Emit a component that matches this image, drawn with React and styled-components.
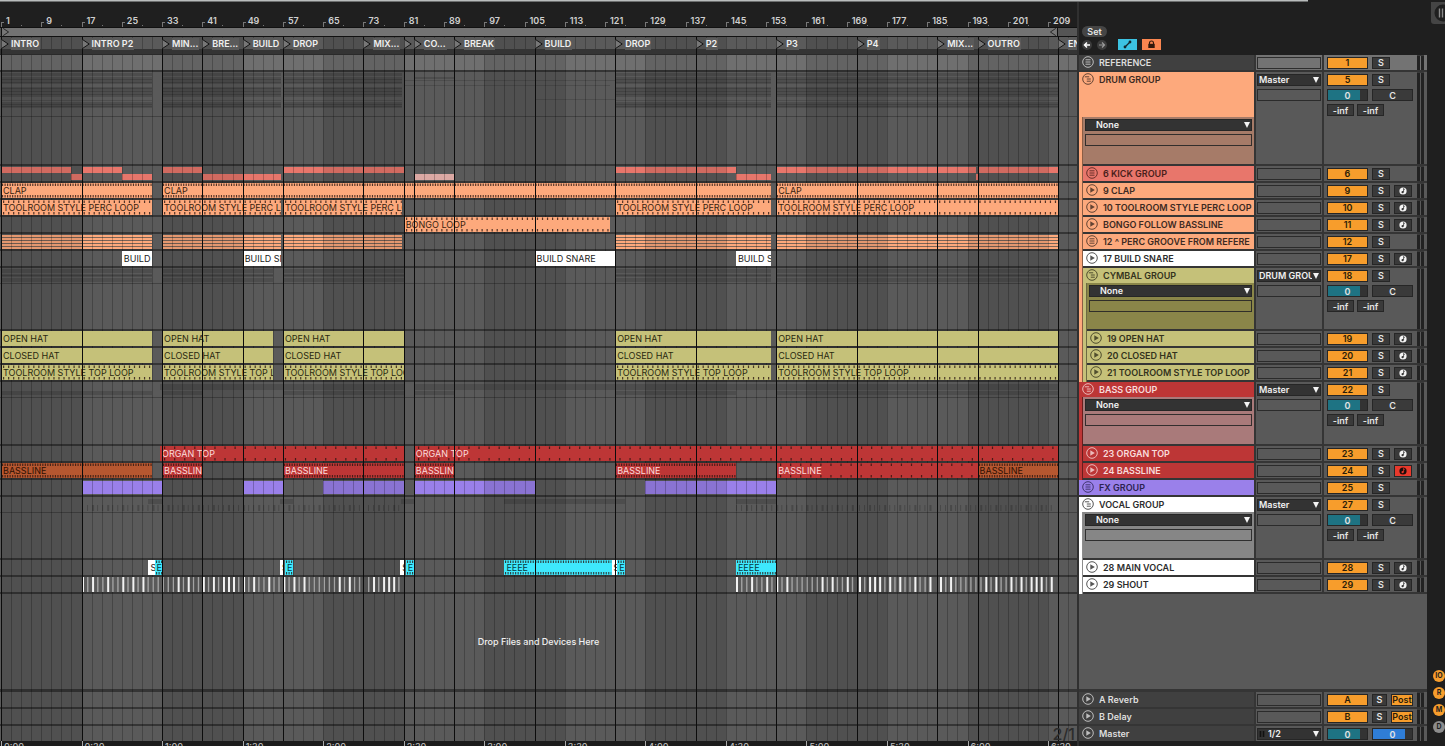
import React from 'react'
import styled, { createGlobalStyle, css } from 'styled-components'

const GlobalStyle = createGlobalStyle`
    * {
        box-sizing: border-box;
    }

    body {
        margin: 0;
        background: #1f1f1f;
        font-family: Inter, 'Liberation Sans', sans-serif;
        font-size: 9px;
        font-weight: 500;
        line-height: 12px;
        color: #e4e4e4;
        overflow: hidden;
    }

    button, input, select {
        font: inherit;
        color: inherit;
        margin: 0;
        padding: 0;
        border: 0;
        border-radius: 0;
    }
`

// how many bars fit in the visible part of the arrangement
const VIEW_BARS = 213.95
const pos = bar => `${(bar - 0.8) / VIEW_BARS * 100}%`
const span = (from, to) => ({ left: pos(from), width: `${(to - from) / VIEW_BARS * 100}%` })
const range = (count, fn) => Array.from({ length: count }, (_, i) => fn(i))

const ORANGE = '#fda97c'
const OLIVE = '#c5c179'
const RED = '#bd3636'
const RUST = '#b65730'
const CORAL = '#e8766b'
const VIOLET = '#9a80ea'
const CYAN = '#3ee8fd'

const LOCATORS = [
    [1, 'INTRO'], [17, 'INTRO P2'], [33, 'MIN...'], [41, 'BRE...'], [49, 'BUILD'], [57, 'DROP'],
    [73, 'MIX...'], [81, ''], [83, 'CO...'], [91, 'BREAK'], [107, 'BUILD'], [123, 'DROP'],
    [139, 'P2'], [155, 'P3'], [171, 'P4'], [187, 'MIX...'], [195, 'OUTRO'], [211, 'END'],
]

const clips = (ranges, name, color, text, step) => ranges.map(([from, to]) => ({ from, to, name, color, text, step }))

const LOOPS = [[1, 31], [33, 56.6], [57, 80.6], [123, 154], [155, 211]]
const HATS = [[1, 31], [33, 55], [57, 81], [123, 154], [155, 211]]
const VOCALS = [[30.3, 33], [56.5, 59], [80.4, 83], [101, 125], [147, 155]]
const SHOUTS = [[17, 73], [74, 81], [147, 171], [171.5, 187], [187.5, 211]]

const TRACKS = [
    { id: 1, name: 'REFERENCE', kind: 'group', color: '#404040', text: '#dedede', lane: '#6f6f6f' },
    {
        id: 5, name: 'DRUM GROUP', kind: 'open', color: ORANGE, device: '#a67b68', text: '#3c2a22', height: 94, title: 45, out: 'Master',
        shades: [
            ...LOOPS.map(([a, b]) => [a, b, [[1, 3], [5, 6], [7, 1], [10, 2], [15, 10], [16, 1], [19, 1], [22, 1], [28, 1], [30, 6], [32, 1], [34, 1]]]),
            [81, 123, [[8, 1]]], [81, 122, [[13, 1]]], [83, 91, [[5, 2]]], [107, 123, [[27, 1]]],
        ],
    },
    {
        id: 6, name: '6 KICK GROUP', kind: 'group', color: CORAL, text: '#4a1f1b', rails: [ORANGE],
        stripes: [
            [1, 15, 1], [15, 17, 2], [17, 25, 1], [25, 31, 2], [33, 41, 1], [41, 56.6, 2], [57, 81, 1], [83, 91, 2, '#dba8a3'],
            [123, 147, 1], [147, 154, 2], [155, 194.6, 1], [194.6, 195, 2], [195, 211, 1],
        ],
    },
    { id: 9, name: '9 CLAP', color: ORANGE, text: '#3c2a22', rails: [ORANGE], rec: true, clips: clips([[1, 31], [33, 154], [155, 211]], 'CLAP', ORANGE, '#38220f', 0.5) },
    { id: 10, name: '10 TOOLROOM STYLE PERC LOOP', color: ORANGE, text: '#3c2a22', rails: [ORANGE], rec: true, clips: clips(LOOPS, 'TOOLROOM STYLE PERC LOOP', ORANGE, '#38220f', 1) },
    { id: 11, name: 'BONGO FOLLOW BASSLINE', color: ORANGE, text: '#3c2a22', rails: [ORANGE], rec: true, clips: clips([[81, 122]], 'BONGO LOOP', ORANGE, '#38220f', 1) },
    { id: 12, name: '12 ^ PERC GROOVE FROM REFERE', kind: 'group', color: ORANGE, text: '#3c2a22', rails: [ORANGE], layers: LOOPS },
    { id: 17, name: '17 BUILD SNARE', color: '#ffffff', text: '#2c2c2c', rails: [ORANGE], rec: true, clips: clips([[25, 31], [49, 56.6], [107, 123], [147, 154]], 'BUILD SNARE', '#ffffff', '#222222') },
    {
        id: 18, name: 'CYMBAL GROUP', kind: 'open', color: OLIVE, device: '#8a8649', text: '#33321c', rails: [ORANGE], height: 63, title: 15, out: 'DRUM GROUP',
        shades: HATS.map(([a, b]) => [a, b, [[1, 4], [6, 3], [7, 1], [10, 4]]]),
    },
    { id: 19, name: '19 OPEN HAT', color: OLIVE, text: '#33321c', rails: [ORANGE, OLIVE], rec: true, clips: clips(HATS, 'OPEN HAT', OLIVE, '#29280f') },
    { id: 20, name: '20 CLOSED HAT', color: OLIVE, text: '#33321c', rails: [ORANGE, OLIVE], rec: true, clips: clips(HATS, 'CLOSED HAT', OLIVE, '#29280f') },
    { id: 21, name: '21 TOOLROOM STYLE TOP LOOP', color: OLIVE, text: '#33321c', rails: [ORANGE, OLIVE], rec: true, clips: clips(HATS, 'TOOLROOM STYLE TOP LOOP', OLIVE, '#29280f', 1) },
    {
        id: 22, name: 'BASS GROUP', kind: 'open', color: RED, device: '#a97a7a', text: '#f8dcdc', height: 64, title: 15, out: 'Master',
        shades: [[32.6, 81, [[2, 6]]], [83, 211, [[2, 6]]], [1, 31, [[9, 4]]], [33, 41, [[9, 4]]], [57, 81, [[9, 4]]], [83, 91, [[9, 4]]], [123, 147, [[9, 4]]], [155, 211, [[9, 4]]]],
    },
    { id: 23, name: '23 ORGAN TOP', color: RED, text: '#f8dcdc', rails: [RED], rec: true, clips: clips([[32.6, 81], [83, 211]], 'ORGAN TOP', RED, '#fbdcdc', 2) },
    {
        id: 24, name: '24 BASSLINE', color: RED, text: '#f8dcdc', rails: [RED], rec: true, armed: true,
        clips: [
            ...clips([[1, 31], [195, 211]], 'BASSLINE', RUST, '#2e1003', 0.5),
            ...clips([[33, 41], [57, 81], [83, 91], [123, 147]], 'BASSLINE', RED, '#fbdcdc', 0.5),
            ...clips([[155, 195]], 'BASSLINE', RED, '#fbdcdc', 2),
        ],
    },
    { id: 25, name: 'FX GROUP', kind: 'group', color: VIOLET, text: '#2c2350', blocks: [[17, 33], [49, 57], [65, 81], [83, 107], [129, 155]] },
    {
        id: 27, name: 'VOCAL GROUP', kind: 'open', color: '#ffffff', device: '#868686', text: '#2c2c2c', height: 63, title: 15, out: 'Master',
        shades: VOCALS.map(([a, b]) => [a, b, [[2, 5]]]), marks: SHOUTS,
    },
    {
        id: 28, name: '28 MAIN VOCAL', color: '#ffffff', text: '#2c2c2c', rails: ['#ffffff'], rec: true,
        clips: [
            ...clips([[30.3, 31.5], [56.4, 57.1], [80.3, 81.3], [122.3, 123.4]], 'S', '#ffffff', '#222222'),
            ...clips([[31.5, 33], [57.4, 59], [81.4, 83], [123.4, 125]], 'E', CYAN, '#083a42', 0.5),
            ...clips([[101, 122.3], [147, 155]], 'EEEE', CYAN, '#083a42', 0.5),
        ],
    },
    { id: 29, name: '29 SHOUT', color: '#ffffff', text: '#2c2c2c', rails: ['#ffffff'], rec: true, hits: SHOUTS },
]

const RETURNS = [{ id: 'A', name: 'A Reverb' }, { id: 'B', name: 'B Delay' }, { id: 'M', name: 'Master', master: true }]

/* ---------- frame ---------- */

const Screen = styled.div`
    height: 100vh;
    display: flex;
    flex-direction: column;
`

const ProgressLine = styled.div`
    height: 2px;
    flex: none;
    margin-right: 137px;
    background: #b9bcbc;
    border-bottom: 1px solid #6d6f6f;
`

const Main = styled.main`
    flex: 1;
    min-height: 0;
    display: flex;
`

const Arrangement = styled.section`
    flex: 1;
    min-width: 0;
    display: flex;
    flex-direction: column;
    overflow: hidden;
`

/* ---------- rulers ---------- */

const Ruler = styled.div`
    position: relative;
    height: 25px;
    flex: none;
`

const BarNumber = styled.span`
    position: absolute;
    top: 13px;
    padding-left: 5px;
    font-weight: 600;
    color: #cfcfcf;

    &::before {
        content: '';
        position: absolute;
        left: 0;
        top: 7px;
        width: 2px;
        height: 4px;
        border-left: 1px solid #777;
        border-top: 1px solid #777;
    }
`

const BarDot = styled.i`
    position: absolute;
    bottom: 1px;
    width: 1px;
    height: 1px;
    background: #777;
`

const ScrubArea = styled.div`
    position: relative;
    height: 10px;
    flex: none;
    background: #555;
    border-top: 1px solid #111;
    border-bottom: 1px solid #111;
`

const LoopBrace = styled.div`
    position: absolute;
    top: 0;
    bottom: 0;
    display: flex;
    justify-content: space-between;
    background: #737373;
    border-left: 1px solid #111;
    border-right: 1px solid #111;

    svg {
        height: 8px;
        width: 8px;
    }
`

const TimeRuler = styled.div`
    position: relative;
    height: 5px;
    flex: none;
    overflow: hidden;
    background: #1c1c1c;
`

const TimeMark = styled.span`
    position: absolute;
    top: 0;
    padding-left: 2px;
    border-left: 1px solid #aaa;
    color: #bbb;
`

/* ---------- lanes ---------- */

const Lanes = styled.div`
    position: relative;
    z-index: 0;
    flex: 1;
    min-height: 0;
    display: flex;
    flex-direction: column;
    background: #5a5a5a;
    overflow: hidden;
`

const Layer = styled.div`
    position: absolute;
    inset: 0;
    z-index: ${props => props.$level};
    pointer-events: none;
`

const Band = styled.i`
    position: absolute;
    top: 0;
    bottom: 0;
    background: rgba(0, 0, 0, 0.1);
`

const GridLine = styled.i`
    position: absolute;
    top: 0;
    bottom: 0;
    width: 1px;
    background: rgba(0, 0, 0, 0.23);
`

const LocatorLine = styled.i`
    position: absolute;
    top: 0;
    bottom: 0;
    width: 1px;
    background: #0c0c0c;
`

const LocatorRow = styled.div`
    position: relative;
    height: 12px;
    flex: none;
`

const LocatorGap = styled.div`
    position: relative;
    z-index: 3;
    height: 6px;
    flex: none;
    background: #343434;
    border-bottom: 1px solid #2a2a2a;
`

const Locator = styled.span`
    position: absolute;
    z-index: 5;
    top: 1px;
    display: flex;
    align-items: center;
    gap: 2px;
    height: 12px;
    font-weight: 600;
    color: #f0f0f0;
    white-space: nowrap;

    svg {
        width: 8px;
        height: 10px;
        flex: none;
    }
`

const LocatorName = styled.span`
    background: #5a5a5a;
    padding-right: 1px;
`

const Lane = styled.div`
    position: relative;
    height: ${props => props.$height || 17}px;
    flex: none;
    border-bottom: ${props => props.$last ? 0 : 2}px solid #353535;
    background: ${props => props.$color || 'transparent'};
`

const FoldLine = styled.i`
    position: absolute;
    left: 0;
    right: 0;
    top: ${props => props.$top}px;
    height: 1px;
    background: #424242;
`

const Shade = styled.i`
    position: absolute;
    top: ${props => props.$top}px;
    height: ${props => props.$height}px;
    background: rgba(0, 0, 0, 0.14);
`

const GroupBlock = styled.i`
    position: absolute;
    z-index: 1;
    top: ${props => props.$top}px;
    height: ${props => props.$height}px;
    background: ${props => props.$color};
`

const GroupLayers = styled(GroupBlock)`
    background: repeating-linear-gradient(${ORANGE} 0 2px, #7a6457 2px 3px);
`

const ClipBox = styled.div`
    position: absolute;
    z-index: 3;
    top: 0;
    height: 15px;
    padding-left: 2px;
    line-height: 15px;
    font-weight: 400;
    overflow: hidden;
    white-space: nowrap;
    background: ${props => props.$color};
    color: ${props => props.$text};

    svg {
        position: absolute;
        left: 0;
        top: 0;
        width: 100%;
        height: 15px;
    }
`

const HitStrip = styled.svg`
    position: absolute;
    z-index: 3;
    top: 0;
    height: 15px;
`

const MarkStrip = styled.svg`
    position: absolute;
    top: 8px;
    height: 6px;
`

const DropZone = styled.div`
    flex: 1;
    min-height: 0;
    display: flex;
    align-items: center;
    justify-content: center;
    border-bottom: 3px solid #353535;

    span {
        position: relative;
        z-index: 5;
        color: #f0f0f0;
    }
`

const GridSize = styled.span`
    position: absolute;
    z-index: 5;
    right: 2px;
    top: 0;
    font-size: 16px;
    line-height: 16px;
    font-weight: 500;
    color: #2c2c2c;
`

/* ---------- track panel ---------- */

const Panel = styled.section`
    width: 350px;
    flex: none;
    display: flex;
    flex-direction: column;
    border-left: 2px solid #303030;
`

const PanelTop = styled.div`
    height: 53px;
    flex: none;
    padding: 24px 3px 0;
    background: #1f1f1f;
`

const SetButton = styled.button`
    display: block;
    width: 25px;
    height: 11px;
    line-height: 11px;
    border-radius: 6px;
    font-weight: 600;
    background: #454545;
`

const Tools = styled.div`
    display: flex;
    align-items: center;
    margin-top: 2px;
    gap: 5px;
`

const RoundButton = styled.button`
    width: 10px;
    height: 10px;
    border-radius: 5px;
    background: #3c3c3c;
    color: ${props => props.$dim ? '#9a9a9a' : '#ffffff'};
    display: flex;

    svg {
        width: 10px;
        height: 10px;
    }
`

const ToolButton = styled.button`
    width: 19px;
    height: 11px;
    display: flex;
    justify-content: center;
    background: ${props => props.$color};

    svg {
        width: 11px;
        height: 11px;
    }
`

const ToolPair = styled.div`
    display: flex;
    gap: 5px;
    margin-left: 6px;
`

const TrackRow = styled.div`
    height: ${props => props.$height || 17}px;
    flex: none;
    display: flex;
    gap: 2px;
    background: #353535;
    overflow: hidden;
`

const TrackHead = styled.div`
    flex: 1;
    min-width: 0;
    display: flex;
`

const Rail = styled.i`
    width: 4px;
    flex: none;
    border-right: 1px solid rgba(0, 0, 0, 0.45);
    background: ${props => props.$color};
`

const TrackBody = styled.div`
    flex: 1;
    min-width: 0;
    display: flex;
    flex-direction: column;
`

const TrackTitle = styled.div`
    height: ${props => props.$height || 15}px;
    flex: none;
    display: flex;
    gap: 5px;
    padding-left: 3px;
    line-height: 15px;
    font-weight: 600;
    white-space: nowrap;
    overflow: hidden;
    background: ${props => props.$color};
    color: ${props => props.$text};

    svg {
        width: 12px;
        height: 12px;
        margin-top: 1px;
        flex: none;
        opacity: 0.8;
    }
`

const DeviceWrap = styled.div`
    flex: 1;
    display: flex;
`

const DeviceArea = styled.div`
    flex: 1;
    display: flex;
    flex-direction: column;
    gap: 3px;
    padding: 2px 2px 0;
    background: ${props => props.$color};
    border-bottom: 2px solid #353535;
`

const cell = css`
    display: flex;
    flex-direction: column;
    gap: 3px;
    padding: 2px 1px 0;
    border-bottom: ${props => props.$last ? 0 : 2}px solid #353535;
    background: ${props => props.$light ? '#737373' : '#595959'};
`

const IoCell = styled.div`
    width: 66px;
    flex: none;
    ${cell}
`

const MixerCell = styled.div`
    width: 103px;
    flex: none;
    ${cell}
    flex-direction: row;
    justify-content: space-between;
    padding: 0 3px;
`

const Controls = styled.div`
    display: flex;
    flex-direction: column;
    gap: 3px;
    padding-top: 2px;
`

const ControlLine = styled.div`
    display: flex;
    gap: ${props => props.$gap || 4}px;
`

const Slot = styled.div`
    height: 12px;
    border: 1px solid #262626;
    opacity: 0.9;
`

const SelectBox = styled.div`
    height: 12px;
    display: flex;
    align-items: center;
    background: #333;
    border: 1px solid #262626;
    font-weight: 600;
    color: #f0f0f0;

    select {
        flex: 1;
        min-width: 0;
        height: 10px;
        padding-left: ${props => props.$indent || 1}px;
        line-height: 10px;
        appearance: none;
        background: none;
        overflow: hidden;
        text-overflow: clip;
    }

    svg {
        width: 8px;
        height: 6px;
        flex: none;
        pointer-events: none;
    }
`

const boxed = css`
    height: 12px;
    line-height: 10px;
    border: 1px solid #262626;
    text-align: center;
    font-weight: 600;
`

const Activator = styled.button`
    ${boxed}
    width: 41px;
    background: #f79d2c;
    color: #2b1c08;
`

const SmallButton = styled.button`
    ${boxed}
    width: ${props => props.$width || 18}px;
    background: ${props => props.$armed ? '#e8392c' : props.$on ? '#f79d2c' : '#3a3a3a'};
    color: ${props => props.$on ? '#2b1c08' : '#e4e4e4'};
    display: flex;
    align-items: center;
    justify-content: center;

    svg {
        width: 8px;
        height: 8px;
    }
`

const ValueInput = styled.input`
    ${boxed}
    width: ${props => props.$width || 41}px;
    min-width: 0;
    background: ${props => props.$fill ? `linear-gradient(90deg, ${props.$fill} 83%, #333 83%)` : '#3a3a3a'};
`

const Meter = styled.div`
    display: flex;
    gap: 1px;
    width: 7px;
    border-top: 1px solid #3a3a3a;

    i {
        flex: 1;
        background: #222;
    }
`

const EmptyPanel = styled.div`
    flex: 1;
    min-height: 0;
    background: #595959;
    border-bottom: 3px solid #353535;
`

const PanelFoot = styled.div`
    height: 5px;
    flex: none;
    background: #1f1f1f;
`

const SideBar = styled.aside`
    width: 18px;
    flex: none;
    display: flex;
    flex-direction: column;
    align-items: flex-end;
    justify-content: space-between;
    padding-bottom: 13px;
    overflow: hidden;
`

const SideHandle = styled.button`
    width: 14px;
    height: 22px;
    background: #454545;
    border-radius: 0 0 0 3px;
    overflow: hidden;

    svg {
        display: block;
        width: 18px;
        height: 18px;
        margin-left: 3px;
    }
`

const Badges = styled.div`
    display: flex;
    flex-direction: column;
    gap: 5px;
`

const Badge = styled.button`
    width: 12px;
    height: 12px;
    border-radius: 6px;
    font-size: 7px;
    line-height: 12px;
    font-weight: 700;
    background: ${props => props.$off ? '#8c8c8c' : '#f79d2c'};
    color: #1f1f1f;
`

/* ---------- icons ---------- */

const PlayIcon = () => (
    <svg viewBox='0 0 12 12' fill='none' stroke='currentColor' strokeWidth='1'>
        <circle cx='6' cy='6' r='5.3' />
        <path d='M4.3 3.2v5.6L8.8 6z' fill='currentColor' stroke='none' />
    </svg>
)

const FoldedIcon = () => (
    <svg viewBox='0 0 12 12' fill='none' stroke='currentColor' strokeWidth='1'>
        <circle cx='6' cy='6' r='5.3' />
        <path d='M3.5 3.8h5M3.5 6h5M3.5 8.2h5' />
    </svg>
)

const UnfoldedIcon = () => (
    <svg viewBox='0 0 12 12' fill='none' stroke='currentColor' strokeWidth='1'>
        <circle cx='6' cy='6' r='5.3' />
        <path d='M2.8 3.8h4.4M4.8 6h4M4.8 8.2h4' />
    </svg>
)

const FlagIcon = ({ flip }) => (
    <svg viewBox='0 0 8 10'>
        <path d={flip ? 'M7.5 .5L.8 5l6.7 4.5' : 'M.5 .5L7.2 5L.5 9.5'} fill='#777' stroke='#151515' strokeWidth='1' />
    </svg>
)

const ArrowDown = () => (
    <svg viewBox='0 0 8 6'><path d='M1 0h6L4 6z' fill='#f4f4f4' /></svg>
)

const NoteIcon = ({ armed }) => (
    <svg viewBox='0 0 8 8'>
        <circle cx='4' cy='4' r='3.6' fill={armed ? '#1b0d0b' : '#f4f4f4'} />
        <path d='M4.6 1.4v3.7M4.6 1.6l1.2 1' stroke={armed ? '#e8392c' : '#333'} strokeWidth='.8' fill='none' />
        <circle cx='3.6' cy='5.2' r='1.1' fill={armed ? '#e8392c' : '#333'} />
    </svg>
)

const trackIcons = { group: FoldedIcon, open: UnfoldedIcon }

/* ---------- arrangement parts ---------- */

const Clip = ({ from, to, name, color, text, step }) => {
    const ticks = {
        x1: 0,
        x2: '100%',
        stroke: '#2a1712',
        strokeOpacity: 0.8,
        strokeWidth: 2.6,
        pathLength: (to - from) / (step || 1),
        strokeDasharray: step === 0.5 ? '.45 .55' : `${0.24 / step} ${1 - 0.24 / step}`,
        strokeDashoffset: -0.4,
    }

    return (
        <ClipBox style={span(from, to)} $color={color} $text={text}>
            {step && (
                <svg>
                    <line y1='1.7' y2='1.7' {...ticks} />
                    <line y1='13.3' y2='13.3' {...ticks} />
                </svg>
            )}
            {name}
        </ClipBox>
    )
}

// bright hits repeat over a 32 bar phrase, the rest are quiet ones
const LOUD = [0, 2, 5, 8, 10, 12, 19, 21, 24, 26, 28, 29, 30]

const Hits = ({ from, to }) => (
    <HitStrip style={span(from, to)} viewBox={`0 0 ${(to - from) * 5} 15`} preserveAspectRatio='none'>
        {range(Math.floor(to - from), i => {
            const loud = LOUD.includes((Math.floor(from) - 17 + i) % 32)
            return <rect key={i} x={i * 5} y='0' width={loud ? 2 : 1.4} height='15' fill={loud ? '#f2f2f2' : '#a2a2a2'} />
        })}
    </HitStrip>
)

const Marks = ({ from, to }) => (
    <MarkStrip style={span(from, to)} viewBox={`0 0 ${(to - from) * 5} 6`} preserveAspectRatio='none'>
        {range(Math.floor(to - from), i => (
            <rect key={i} x={i * 5} y='0' width={i % 3 === 2 ? 2 : 1} height='6' fill='#000' fillOpacity='.2' />
        ))}
    </MarkStrip>
)

const TrackLane = ({ track }) => (
    <Lane $height={track.height} $color={track.lane}>
        {track.kind === 'open' && <FoldLine $top={track.title - (track.title > 15 ? 1 : 0)} />}
        {(track.shades || []).map(([from, to, rows], i) => rows.map(([top, height]) => (
            <Shade key={`${i}-${top}`} style={span(from, to)} $top={top} $height={height} />
        )))}
        {(track.stripes || []).map(([from, to, row, color]) => (
            <GroupBlock key={from} style={span(from, to)} $top={row === 1 ? 1 : 8} $height={6} $color={color || track.color} />
        ))}
        {(track.blocks || []).map(([from, to]) => (
            <GroupBlock key={from} style={span(from, to)} $top={1} $height={13} $color={track.color} />
        ))}
        {(track.layers || []).map(([from, to]) => (
            <GroupLayers key={from} style={span(from, to)} $top={1} $height={14} />
        ))}
        {(track.clips || []).map(clip => <Clip key={clip.from} {...clip} />)}
        {(track.hits || []).map(([from, to]) => <Hits key={from} from={from} to={to} />)}
        {(track.marks || []).map(([from, to]) => <Marks key={from} from={from} to={to} />)}
    </Lane>
)

/* ---------- panel parts ---------- */

const Dropdown = ({ label, value, indent, children }) => (
    <SelectBox $indent={indent}>
        {children}
        <select aria-label={label} defaultValue={value}>
            <option>{value}</option>
        </select>
        <ArrowDown />
    </SelectBox>
)

const Mixer = ({ track }) => {
    const [solo, setSolo] = React.useState(false)

    return (
        <MixerCell $light={track.id === 1}>
            <Controls>
                <ControlLine>
                    <Activator aria-label={`${track.name} on`}>{track.id}</Activator>
                    <SmallButton aria-label={`${track.name} solo`} $on={solo} onClick={() => setSolo(!solo)}>S</SmallButton>
                    {track.rec && <SmallButton aria-label={`Arm ${track.name}`} $armed={track.armed}><NoteIcon armed={track.armed} /></SmallButton>}
                </ControlLine>
                {track.kind === 'open' && (
                    <>
                        <ControlLine>
                            <ValueInput aria-label='Volume' defaultValue='0' $fill='#1e7383' />
                            <ValueInput aria-label='Pan' defaultValue='C' />
                        </ControlLine>
                        <ControlLine $gap={3}>
                            <ValueInput aria-label='Send A' defaultValue='-inf' $width={27} />
                            <ValueInput aria-label='Send B' defaultValue='-inf' $width={27} />
                        </ControlLine>
                    </>
                )}
            </Controls>
            <Meter><i /><i /></Meter>
        </MixerCell>
    )
}

const Track = ({ track }) => {
    const Icon = trackIcons[track.kind] || PlayIcon

    return (
        <TrackRow $height={track.height}>
            <TrackHead>
                {(track.rails || []).map(color => <Rail key={color} $color={color} />)}
                <TrackBody>
                    <TrackTitle $height={track.title} $color={track.color} $text={track.text}><Icon />{track.name}</TrackTitle>
                    {track.kind === 'open' && (
                        <DeviceWrap>
                            <Rail $color={track.color} />
                            <DeviceArea $color={track.device}>
                                <Dropdown label={`${track.name} automation`} value='None' indent={10} />
                                <Slot />
                            </DeviceArea>
                        </DeviceWrap>
                    )}
                </TrackBody>
            </TrackHead>
            <IoCell $light={track.id === 1}>
                {track.out && <Dropdown label={`${track.name} output`} value={track.out} />}
                <Slot />
            </IoCell>
            <Mixer track={track} />
        </TrackRow>
    )
}

const ReturnTrack = ({ id, name, master }) => (
    <TrackRow $height={master ? 15 : 17}>
        <TrackHead>
            <TrackBody>
                <TrackTitle $color='#404040' $text='#dedede'><PlayIcon />{name}</TrackTitle>
            </TrackBody>
        </TrackHead>
        <IoCell $last={master}>
            {master ? (
                <Dropdown label='Master output' value='1/2' indent={2}>
                    <svg viewBox='0 0 8 6'><path d='M2.5 0v6M5.5 0v6' stroke='#111' strokeWidth='1.6' /></svg>
                </Dropdown>
            ) : <Slot />}
        </IoCell>
        <MixerCell $last={master}>
            <Controls>
                {master ? (
                    <ControlLine>
                        <ValueInput aria-label='Master volume' defaultValue='0' $fill='#1e7383' />
                        <ValueInput aria-label='Cue volume' defaultValue='0' $fill='#2f7dd6' />
                    </ControlLine>
                ) : (
                    <ControlLine>
                        <Activator aria-label={`${name} on`}>{id}</Activator>
                        <SmallButton $width={15}>S</SmallButton>
                        <SmallButton $width={22} $on>Post</SmallButton>
                    </ControlLine>
                )}
            </Controls>
            <Meter><i /><i /></Meter>
        </MixerCell>
    </TrackRow>
)

const App = () => (
    <Screen>
        <GlobalStyle />
        <ProgressLine />
        <Main>
            <Arrangement>
                <Ruler>
                    {range(27, i => <BarNumber key={i} style={{ left: pos(i * 8 + 1) }}>{i * 8 + 1}</BarNumber>)}
                    {range(26, i => <BarDot key={i} style={{ left: pos(i * 8 + 5) }} />)}
                </Ruler>
                <ScrubArea>
                    <LoopBrace style={span(1, 211)}>
                        <FlagIcon />
                        <FlagIcon flip />
                    </LoopBrace>
                </ScrubArea>
                <Lanes>
                    <Layer $level={2}>
                        {range(7, i => <Band key={i} style={span(i * 32 + 1, i * 32 + 17)} />)}
                        {range(107, i => <GridLine key={i} style={{ left: pos(i * 2 + 1) }} />)}
                    </Layer>
                    <Layer $level={4}>
                        {LOCATORS.map(([bar]) => <LocatorLine key={bar} style={{ left: pos(bar) }} />)}
                    </Layer>
                    <LocatorRow>
                        {LOCATORS.map(([bar, name]) => (
                            <Locator key={bar} style={{ left: pos(bar) }}>
                                <FlagIcon />
                                {name && <LocatorName>{name}</LocatorName>}
                            </Locator>
                        ))}
                    </LocatorRow>
                    <LocatorGap />
                    {TRACKS.map(track => <TrackLane key={track.id} track={track} />)}
                    <DropZone><span>Drop Files and Devices Here</span></DropZone>
                    {RETURNS.map(({ id, master }) => (
                        <Lane key={id} $height={master ? 15 : 17} $last={master}>{master && <GridSize>2/1</GridSize>}</Lane>
                    ))}
                </Lanes>
                <TimeRuler>
                    {range(14, i => (
                        <TimeMark key={i} style={{ left: pos(i * 16 + 1) }}>{`${Math.floor(i / 2)}:${i % 2 ? '30' : '00'}`}</TimeMark>
                    ))}
                </TimeRuler>
            </Arrangement>
            <Panel>
                <PanelTop>
                    <SetButton>Set</SetButton>
                    <Tools>
                        <RoundButton aria-label='Previous locator'>
                            <svg viewBox='0 0 10 10'><path d='M8 5H3M5 2.5L2.5 5L5 7.5' stroke='currentColor' strokeWidth='1.5' fill='none' /></svg>
                        </RoundButton>
                        <RoundButton aria-label='Next locator' $dim>
                            <svg viewBox='0 0 10 10'><path d='M2 5h5M5 2.5L7.5 5L5 7.5' stroke='currentColor' strokeWidth='1.2' fill='none' /></svg>
                        </RoundButton>
                        <ToolPair>
                            <ToolButton aria-label='Automation mode' $color='#3cc3e2'>
                                <svg viewBox='0 0 11 11'>
                                    <path d='M3 8L8 3' stroke='#14272c' strokeWidth='1.2' />
                                    <circle cx='3' cy='8' r='1.4' fill='#14272c' />
                                    <circle cx='8' cy='3' r='1.4' fill='#14272c' />
                                </svg>
                            </ToolButton>
                            <ToolButton aria-label='Lock envelopes' $color='#fb8650'>
                                <svg viewBox='0 0 11 11'>
                                    <path d='M3.5 5V4a2 2 0 0 1 4 0v1' stroke='#33190c' strokeWidth='1.1' fill='none' />
                                    <rect x='2.3' y='4.8' width='6.4' height='4.2' fill='#33190c' />
                                </svg>
                            </ToolButton>
                        </ToolPair>
                    </Tools>
                </PanelTop>
                {TRACKS.map(track => <Track key={track.id} track={track} />)}
                <EmptyPanel />
                {RETURNS.map(item => <ReturnTrack key={item.id} {...item} />)}
                <PanelFoot />
            </Panel>
            <SideBar>
                <SideHandle aria-label='Toggle browser'>
                    <svg viewBox='0 0 18 18'>
                        <circle cx='9' cy='9' r='8.5' fill='#1f1f1f' />
                        <path d='M5.5 4.5v9M8.5 4.5v9' stroke='#8a8a8a' strokeWidth='1.4' />
                    </svg>
                </SideHandle>
                <Badges>
                    <Badge>IO</Badge>
                    <Badge>R</Badge>
                    <Badge>M</Badge>
                    <Badge $off>D</Badge>
                </Badges>
            </SideBar>
        </Main>
    </Screen>
)

export default App
